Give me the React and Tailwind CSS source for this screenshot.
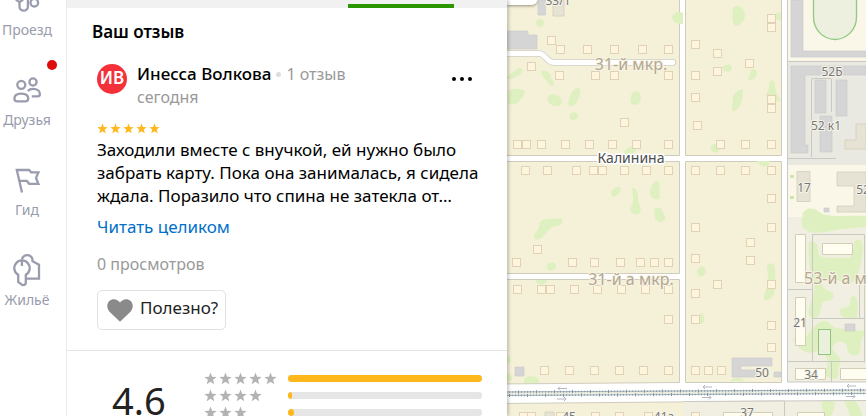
import React from 'react';

const navItems = [
  {
    label: 'Проезд',
    icon: (
      <>
        <circle cx="8.5" cy="14" r="3.6" />
        <path d="M8.5 17.6v4.9a4.2 4.2 0 0 0 8.4 0V10" />
        <circle cx="23.3" cy="18.7" r="3.8" />
        <path d="M23.3 15V8" />
      </>
    ),
  },
  {
    label: 'Друзья',
    dot: true,
    icon: (
      <>
        <circle cx="10.3" cy="10.8" r="4" />
        <path d="M3.4 24.6c0-3.4 2.9-5 6.9-5s6.9 1.6 6.9 5c0 1.9-.9 2.7-2.5 2.7H5.9c-1.6 0-2.5-.8-2.5-2.7Z" />
        <circle cx="22" cy="8" r="3.6" />
        <path d="M16.8 17c1.3-1.5 3-2.1 5.2-2.1 4 0 6.9 2 6.9 5 0 1.6-.8 2.4-2.3 2.4h-5.8" />
      </>
    ),
  },
  {
    label: 'Гид',
    icon: <path d="m11 28.5-5.2-22.5h12.2l2.2 2.4h7.2l-2.4 5.5 2.4 5.9h-9.2l-2.4-2.9H8.4" />,
  },
  {
    label: 'Жильё',
    icon: (
      <>
        <path d="M10.9 6v6" />
        <path d="M7.2 20.8a7.7 7.7 0 1 1 7.6 0v7.7c0 1.6-1.5 2.7-3.3 2.7L7.2 28Z" />
        <path d="M10.9 5.6a5.2 5.2 0 0 1 10.6 1.6l6.5 3.6v13.9H15" />
      </>
    ),
  },
];

const ratings = [
  { stars: 5, value: 100 },
  { stars: 4, value: 2 },
  { stars: 3, value: 3 },
];

const Star = ({ className }) => (
  <svg viewBox="0 0 14 14" className={className} fill="currentColor" aria-hidden="true">
    <path d="m7 .5 1.700 4.600 4.900.2-3.800 3.100 1.300 4.800L7 10.500l-4.100 2.700 1.300-4.800L.4 5.300l4.900-.2z" />
  </svg>
);

// small private houses, [x, y] of the top left corner
const houses = [
  [547, 36], [556, 45], [583, 45], [610, 45], [638, 45], [664, 45],
  [527, 62], [555, 71], [591, 71], [610, 71], [664, 71], [620, 118],
  [513, 140], [522, 140], [537, 140], [561, 140], [585, 140], [608, 140], [632, 140], [664, 140],
  [521, 166], [543, 166], [572, 166], [589, 166], [598, 166], [620, 166], [642, 166], [664, 166],
  [533, 245], [512, 258], [568, 258], [590, 258], [616, 258], [636, 258], [650, 258], [664, 258],
  [513, 285], [537, 285], [546, 285], [570, 285], [593, 285], [617, 285], [641, 285], [664, 285],
  [664, 315], [540, 366], [565, 366], [590, 366], [615, 366], [639, 366], [664, 366],
  [767, 14], [767, 23], [691, 40], [713, 49], [745, 59], [713, 67], [691, 71], [691, 93],
  [767, 95], [767, 104], [693, 121], [716, 140], [741, 140], [767, 140],
  [691, 166], [716, 166], [741, 166], [767, 166], [767, 194],
  [691, 223], [767, 223], [746, 238], [746, 256], [691, 254], [713, 280], [691, 289],
  [767, 280], [691, 315], [767, 321], [767, 343], [691, 366], [704, 366], [717, 366],
  [519, 412], [527, 412], [556, 412], [591, 412], [615, 412], [644, 412], [691, 412],
];

const mapLabels = [
  { x: 558, y: 5, text: '33/1' },
  { x: 832, y: 76, text: '52Б' },
  { x: 826, y: 130, text: '52 к1' },
  { x: 804, y: 192, text: '17' },
  { x: 863, y: 194, text: '52' },
  { x: 800, y: 327, text: '21' },
  { x: 811, y: 379, text: '34' },
  { x: 762, y: 377, text: '50' },
  { x: 747, y: 417, text: '37' },
  { x: 569, y: 421, text: '45' },
  { x: 664, y: 421, text: '41а' },
];

const CityMap = () => (
  <svg
    viewBox="507 0 359 416"
    preserveAspectRatio="xMinYMin slice"
    className="block h-full w-full font-['Noto_Sans',sans-serif]"
    role="img"
    aria-label="Карта"
  >
    <rect x="507" width="359" height="416" fill="#fff" />

    {/* blocks */}
    <g fill="#f5f0d8" stroke="#cfccbd">
      <path d="M500-5h179.500v160.500H500zM500 161.500h179.500v112H500zM500 279.500h179.500v103L500 384z" />
      <path d="M685.500-5h96v160.500h-96zM685.500 161.500h96v221h-96z" />
      <path d="m500 403.500 284-2.500v20H500z" />
    </g>
    <path d="M788 0h78v61h-78zM788 165h78v52h-78z" fill="#faf7e8" />
    <path d="M788 62h78v103h-78z" fill="#e9e9e1" />
    <path d="M788 217h78v165h-78zM684 402l182-1.500V416H684z" fill="#f1efe2" />

    {/* greenery */}
    <g fill="#dff0c0">
      <path d="M536 22c2-5 9-3 8 2s-8 4-8-2zM672 17c2-5 8-6 11-4v11c-7 0-11-2-11-7z" />
      <path d="M507 77c4-3 6-5 9-7 3-3 7-3 6 2-3 4-6 4-8 6-3 2-7 1-7-1zM541 71c5-1 10 2 10 6 1 3 4 6 2 9-3 1-5-4-7-6-3-3-5-5-5-9z" />
      <path d="M508 91c4-3 11-2 16-1 2 3-2 8-5 12-3 3-9 2-11 2zM548 96c4-4 12-1 14 5 0 3-1 5-5 5-6 0-11-4-9-10zM570 96c2-5 4-8 9-8 3 3 0 9-2 14-2 4-5 5-9 3 0-3 1-6 2-9zM570 114c3-3 9-2 8 3-2 5-10 5-8-3zM631 96c1-5 7-7 9-2 2 6 0 11-5 11s-5-5-4-9z" />
      <path d="M624 153c2-5 7-8 12-6 1 4-3 6-5 9-3 1-6 0-7-3zM611 194c1-5 5-8 9-7 3 4-4 10-7 10zM632 188c4-1 7 6 6 12 1 4 4 9 2 13-3 2-7 2-10-2 1-5 4-9 3-14zM650 191c2-8 6-12 9-9 1 6 1 13 0 17-4 1-10-1-9-8z" />
      <path d="M541 221c6-4 12-1 20-3 3 3 1 8-5 8-8 0-9 10-18 14-4 0-6-4-2-8 3-2 3-8 5-11zM547 265c2-4 10-4 9 2-2 6-11 4-9-2zM535 280h12c0 6-10 6-12 0zM654 208h7c2 6 5 7 4 12-4 4-9 2-10-3zM524 380c1-4 9-5 13-2 3 2 2 4 2 5h-15zM507 356c5 0 5 7 0 8zM507 373c5 2 7 5 4 8h-4z" />
      <path d="M733 7c7-3 12 2 12 8 0 5-4 11-10 11-3-4-3-13-2-19zM722 68c3-5 10-4 10 0s-7 6-10 0zM750 73c0-5 7-5 7 0-1 5-4 8-7 7s-1-4 0-7zM733 98c1-6 6-9 10-8 0 8-2 19-9 21-4 0-1-7-1-13zM769 83c2-4 6-4 6 2 0 7 3 11 6 15-3 3-14 2-15-4 1-5 4-8 3-13zM775 14c3-3 6-2 6 1v6l-6-2zM711 146c3-4 10-2 9 3s-10 6-9-3zM757 161h13c-1 8-10 7-13 0z" />
      <path d="M697 271c3-6 8-6 9 0-1 6-8 9-9 0zM767 266c3-5 8-3 8 3s1 11-1 14c3 6-1 19-9 17-3-4 2-11 3-16s-1-12-1-18zM699 314c6-4 8 10 1 10zM730 381c2-4 14-4 14 0z" />
      <path d="M802 215c3-8 9-7 15-5 8 9 29 5 49 6v11c-15 1-25 2-40 5-12 2-30 1-23-17zM809 242c6-3 10 3 9 11 4 7 16 4 32 5 5-5 2-16 6-18 4-2 8 2 7 9-2 15-4 32-12 34-10 3-15-9-26-3-6 3-1 11 7 12 4 5-1 10-8 9-4 3-2 12-7 17-5 3-10-2-8-9 2-10 7-16 5-26-5-10-6-31-5-41z" />
      <path d="M809 333c5-8 14-16 20-10 8 9 15 4 22 6 8 3 17-1 13 7-5 5-2 12-5 18-8 5-13-3-12-9-5-6-10-4-15 2 2 8 11 9 8 18-3 4 0 11-3 13-7 3-13-2-11-9 4-9 0-15-7-19-8 5-18 4-26-10 7-4 18 2 16-17zM840 310c3-4 8-1 10-6 0-9 4-10 7-5 2 8 0 16 0 19-8 3-19 0-17-8zM822 401h12c2 7-1 10-3 15h-7c0-5-4-9-2-15zM845 401h11c2 5 6 8 6 15h-12c-1-6-5-9-5-15z" />
    </g>

    {/* paths and fences */}
    <g fill="none" stroke="#c9c9c4">
      <path d="M788 61.500h78M811.500 157V80q0-1.500 1.500-1.500h17q1.500 0 1.500 1.500v32M788 158.500h48" />
      <path d="M787.500 0v382h79M812.500 234v127M812.500 234.500h52v128M788 289.500h25M812 318.500h52M788 361.500h77M831.500 361v21M859.500 280v38M684 401.500l182-1M784.500 401v15" />
    </g>

    {/* larger buildings */}
    <g fill="#d5d5d5" stroke="#c9c9c9" strokeWidth=".6">
      <path d="M538 0h7.500v15H538zM507 31h21v4h9v14h-30zM791 0h12v51h63v6h-75zM791 66h75v9h-61v70h3v8h-17zM815 80h11v33h-11zM836 80h11v36h-11zM820 116h12v36h-12zM732 358h40v8h-31v4h16v7h-25zM774 372h7v5h-7zM845 324h10v7h-10zM824 208h5v4h-5zM515 367h9v9h-9z" />
    </g>
    <g fill="#e7e3d4" stroke="#d3cdb8" strokeWidth=".8">
      <path d="M553 0h11v16h-11zM866 124h-10v16h-11v9h21zM797 171.500h13v30h-13zM866 172h-29v14h17v20h-17v6h29zM545 412h9v5h-9z" />
    </g>
    <g fill="#fffdf0" stroke="#d3cdb8">
      <path d="M795.500 234.500h10v48h-10zM795.500 297.500h10v48h-10zM822.500 243.500h30v11h-30zM795.500 368.500h30v11h-30zM840.500 368.500h27v11h-27zM864.500 286v30M723.500 412.500h49v5h-49zM797.500 412.500h27v5h-27z" />
    </g>
    <rect x="818.5" y="329.5" width="12" height="25" fill="#eaf0dc" stroke="#8dc67c" />
    <path d="M813.500-5v22a21.500 22.500 0 0 0 43 0V-5z" fill="#edf0df" stroke="#92c883" strokeWidth="1.3" />
    <path d="M790 175h4v3h-4zM790 196h4v3h-4z" fill="#cfe5aa" />

    <g fill="#fff5dd" stroke="#dfd2b6">
      {houses.map(([x, y]) => (
        <rect key={`${x}-${y}`} x={x + 0.5} y={y + 0.5} width="8" height="8" />
      ))}
    </g>

    {/* street with a dead end */}
    <g fill="none" strokeLinecap="round" strokeLinejoin="round">
      <path d="M500 53.500h39c6 0 8 9 15 9h119" stroke="#cfcfcb" strokeWidth="6.5" />
      <path d="M500 53.500h39c6 0 8 9 15 9h119" stroke="#fff" strokeWidth="4.8" />
    </g>

    {/* tram line */}
    <g fill="none">
      <path d="m500 393.500 366-2" stroke="#e9ecdf" strokeWidth="4" />
      <path d="m500 392 366-2M500 395.500l366-2" stroke="#a3b0ba" strokeWidth="1" />
      <path d="m500 392 366-2M500 395.500l366-2" stroke="#8c9dab" strokeWidth="1.6" strokeDasharray="1 2" />
      <path d="m500 392 366-2M509 395.500l357-2" stroke="#7e93a5" strokeWidth="3" strokeDasharray="1 17" />
      <path d="M567 388.500h-9l2-2m-2 2 2 2M557 399h9l-2-2m2 2-2 2M712 387h-9l2-2m-2 2 2 2M702 397.500h9l-2-2m2 2-2 2M856 386h-9l2-2m-2 2 2 2M846 396.500h9l-2-2m2 2-2 2" stroke="#b4b4c4" />
    </g>

    <g textAnchor="middle" paintOrder="stroke" strokeLinejoin="round">
      <g fill="#b3a693" stroke="#f8f4e4" strokeWidth="2" fontSize="16">
        <text x="631" y="70">31-й мкр.</text>
        <text x="631" y="285">31-й а мкр.</text>
        <text x="804" y="284" textAnchor="start">53-й а мкр.</text>
      </g>
      <text x="631" y="163" fill="#4d4d4d" stroke="#fff" strokeWidth="3" fontSize="14">Калинина</text>
      <g fill="#777" stroke="#f6f4ea" strokeWidth="2" fontSize="12">
        {mapLabels.map((label) => (
          <text key={label.text} x={label.x} y={label.y}>{label.text}</text>
        ))}
      </g>
    </g>
  </svg>
);

const Sidebar = () => (
  <nav className="w-[67px] shrink-0 border-r border-[#ededed] bg-white">
    <ul className="-mt-4 flex w-[54px] flex-col gap-[34px]">
      {navItems.map((item) => (
        <li key={item.label}>
          <a href="#" className="relative flex flex-col items-center gap-1 text-[#999cad]">
            <svg viewBox="0 0 32 32" className="h-8 w-8 overflow-visible" fill="none" stroke="currentColor" strokeWidth="2.3">
              {item.icon}
            </svg>
            <span className="text-sm leading-5">{item.label}</span>
            {item.dot && <span className="absolute -top-[14px] -right-[3px] h-[10px] w-[10px] rounded-full bg-[#e00b0b]" />}
          </a>
        </li>
      ))}
    </ul>
  </nav>
);

const Review = () => (
  <article className="pt-[21px] pr-5 pl-[30px]">
    <header className="flex items-start">
      <span className="flex h-[30px] w-[30px] shrink-0 items-center justify-center rounded-full bg-[#f43139] pb-[2px] text-[17px] font-semibold text-white">
        ИВ
      </span>
      <div className="ml-[10px] flex-1">
        <div className="flex h-5 items-center">
          <span className="text-[17px] leading-5 font-medium">Инесса Волкова</span>
          <span className="mx-[5px] h-[5px] w-[5px] rounded-full bg-[#dedede]" />
          <span className="text-base leading-5 text-[#999]">1 отзыв</span>
        </div>
        <p className="mt-[3px] text-base leading-5 text-[#999]">сегодня</p>
      </div>
      <button type="button" aria-label="Ещё" className="mt-[9px] mr-[15px] flex gap-1 py-1">
        <span className="h-1 w-1 rounded-full bg-black" />
        <span className="h-1 w-1 rounded-full bg-black" />
        <span className="h-1 w-1 rounded-full bg-black" />
      </button>
    </header>

    <div className="mt-[15px] flex h-3 items-center gap-[2px] text-[#ffb81c]">
      {[1, 2, 3, 4, 5].map((n) => (
        <Star key={n} className="h-[11px] w-[11px]" />
      ))}
    </div>
    <p className="mt-1 text-[17px] leading-[23px]">
      Заходили вместе с внучкой, ей нужно было забрать карту. Пока она занималась, я сидела ждала. Поразило что спина не затекла от…
    </p>
    <a href="#" className="mt-2 block text-[17px] leading-[23px] text-[#0070c9]">Читать целиком</a>
    <p className="mt-[14px] text-base leading-6 text-[#999]">0 просмотров</p>
    <button type="button" className="mt-[14px] flex h-10 items-center gap-[7px] rounded-[5px] border border-[#e2e2e2] pr-[7px] pb-1 pl-[9px] text-[17px] text-[#222]">
      <svg viewBox="0 0 26 23" className="mt-1 h-[23px] w-[26px]" fill="#8a8a8a" aria-hidden="true">
        <path d="M13 22.800 3.300 13.500C-.8 9.500-.3 4.500 2.300 2 5.500-1 10.500-.2 13 3.600 15.500-.2 20.500-1 23.700 2c2.600 2.500 3.100 7.500-1 11.500z" />
      </svg>
      Полезно?
    </button>
  </article>
);

const Rating = () => (
  <section className="mt-5 flex border-t border-[#e4e4e4] pt-[19px] pr-[25px] pl-[45px]">
    <div className="w-[92px] pt-[6px] text-[38px] leading-[48px] text-[#222]">4.6</div>
    <ul className="flex flex-1 flex-col">
      {ratings.map((row) => (
        <li key={row.stars} className="flex h-[17px] items-center">
          <span className="flex w-[84px] gap-[2px] text-[#b3b3b3]">
            {Array.from({ length: row.stars }, (_, i) => (
              <Star key={i} className="h-[13px] w-[13px]" />
            ))}
          </span>
          <span className="h-[7px] flex-1 overflow-hidden rounded-[3px] bg-[#e6e6e6]">
            <span className="block h-full rounded-[3px] bg-[#ffb81c]" style={{ width: `${row.value}%` }} />
          </span>
        </li>
      ))}
    </ul>
  </section>
);

const App = () => {
  return (
    <div className="flex h-screen overflow-hidden bg-white font-['Noto_Sans',sans-serif] text-black">
      <Sidebar />
      <main className="z-10 w-[440px] shrink-0 bg-white shadow-[2px_0_3px_rgba(0,0,0,0.2)]">
        <div className="flex h-2 items-end bg-[#f1f1f1] pl-[281px]">
          <div className="h-1 w-[106px] bg-[#2b9600]" />
        </div>
        <h2 className="mt-3 px-[25px] text-[17px] leading-[23px] font-semibold">Ваш отзыв</h2>
        <Review />
        <Rating />
      </main>
      <div className="relative min-w-0 flex-1 overflow-hidden">
        <CityMap />
        <div className="absolute top-0 left-0 h-[5px] w-[30px] rounded-br-[5px] bg-white shadow-[0_1px_3px_rgba(0,0,0,0.4)]" />
      </div>
    </div>
  );
};

export default App;
